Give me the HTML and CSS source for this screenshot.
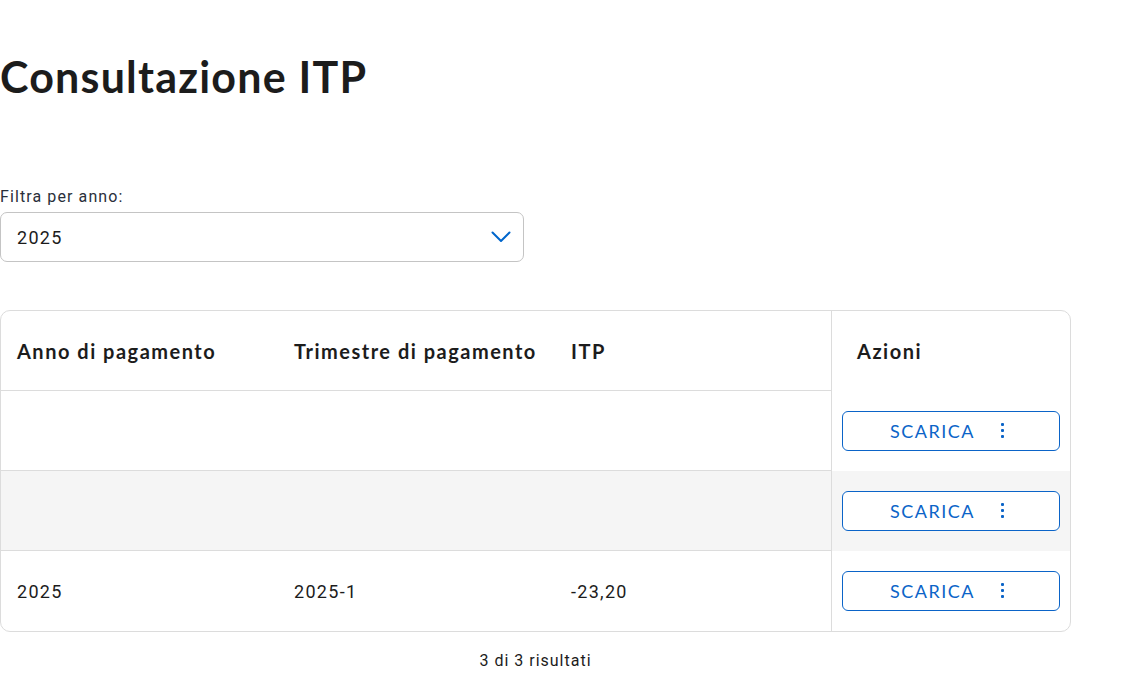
FILE: index.html
```html
<!DOCTYPE html>
<html lang="it">
<head>
<meta charset="utf-8">
<title>Consultazione ITP</title>
<link rel="stylesheet" href="styles.css">
</head>
<body>
<main class="page">
  <h1 class="title">Consultazione ITP</h1>

  <div class="filter">
    <label class="filter-label" for="anno">Filtra per anno:</label>
    <div class="select">
      <span class="select-value">2025</span>
      <svg class="chevron" width="20" height="12" viewBox="0 0 20 12" aria-hidden="true">
        <polyline points="1.5,1.5 10,10 18.5,1.5" fill="none" stroke="#0066cc" stroke-width="2" stroke-linecap="round" stroke-linejoin="round"/>
      </svg>
    </div>
  </div>

  <div class="table">
    <div class="cell head">Anno di pagamento</div>
    <div class="cell head">Trimestre di pagamento</div>
    <div class="cell head">ITP</div>
    <div class="cell head actions head-actions">Azioni</div>

    <div class="cell data"></div>
    <div class="cell data"></div>
    <div class="cell data"></div>
    <div class="cell actions"><button class="btn"><span>SCARICA</span><span class="kebab"><i></i><i></i><i></i></span></button></div>

    <div class="cell data alt"></div>
    <div class="cell data alt"></div>
    <div class="cell data alt"></div>
    <div class="cell actions alt"><button class="btn"><span>SCARICA</span><span class="kebab"><i></i><i></i><i></i></span></button></div>

    <div class="cell data last">2025</div>
    <div class="cell data last">2025-1</div>
    <div class="cell data last">-23,20</div>
    <div class="cell actions"><button class="btn"><span>SCARICA</span><span class="kebab"><i></i><i></i><i></i></span></button></div>
  </div>

  <div class="results">3 di 3 risultati</div>
</main>
</body>
</html>
```

FILE: styles.css
```css
* { box-sizing: border-box; }

html, body {
  margin: 0;
  padding: 0;
  background: #ffffff;
}

body {
  font-family: "Lato", "Noto Sans", sans-serif;
  color: #1c1c1c;
}

.page {
  width: 1125px;
}

.title {
  margin: 52px 0 0 0;
  font-family: "Lato", sans-serif;
  font-weight: 700;
  font-size: 43px;
  line-height: 50px;
  letter-spacing: 1.2px;
  color: #1c1c1c;
}

.filter {
  margin-top: 86px;
  display: flex;
  flex-direction: column;
  width: 524px;
}

.filter-label {
  font-family: "Roboto", sans-serif;
  font-size: 16px;
  line-height: 18px;
  letter-spacing: 1.1px;
  color: #2a2f3a;
  margin-bottom: 6px;
}

.select {
  height: 50px;
  border: 1px solid #c4c4c4;
  border-radius: 7px;
  display: flex;
  align-items: center;
  justify-content: space-between;
  padding: 0 12px 0 16px;
}

.select-value {
  font-family: "Roboto", sans-serif;
  font-size: 18px;
  letter-spacing: 1.3px;
  color: #1c1c1c;
}

.chevron { display: block; }

.table {
  margin-top: 48px;
  width: 1071px;
  display: grid;
  grid-template-columns: 277px 277px 276px 1fr;
  border: 1px solid #dcdcdc;
  border-radius: 10px;
  overflow: hidden;
}

.cell {
  height: 80px;
  display: flex;
  align-items: center;
  padding: 0 16px;
}

.head {
  font-family: "Lato", sans-serif;
  font-weight: 700;
  font-size: 20px;
  letter-spacing: 1.5px;
  color: #1c1c1c;
  border-bottom: 1px solid #dcdcdc;
  white-space: nowrap;
}

.data {
  font-family: "Roboto", sans-serif;
  font-size: 18px;
  letter-spacing: 1.3px;
  color: #1c1c1c;
  border-bottom: 1px solid #dcdcdc;
}

.data.last { border-bottom: none; }

.actions {
  border-left: 1px solid #dcdcdc;
  border-bottom: none;
  padding: 0 10px 0 10px;
}

.head-actions { padding-left: 25px; }

.alt { background: #f5f5f5; }

.btn {
  width: 218px;
  height: 40px;
  border: 1px solid #0b64c8;
  border-radius: 6px;
  background: #ffffff;
  color: #0b64c8;
  font-family: "Lato", sans-serif;
  font-size: 18px;
  letter-spacing: 1.5px;
  display: flex;
  align-items: center;
  justify-content: center;
  gap: 26px;
  padding: 0 8px 0 0;
  cursor: pointer;
}

.kebab {
  display: flex;
  flex-direction: column;
  gap: 3px;
  margin-top: -2px;
}

.kebab i {
  display: block;
  width: 3px;
  height: 3px;
  background: #0b64c8;
  border-radius: 1px;
}

.results {
  width: 1071px;
  text-align: center;
  margin-top: 19px;
  font-family: "Roboto", sans-serif;
  font-size: 16px;
  letter-spacing: 1px;
  color: #1c1c1c;
}
```
